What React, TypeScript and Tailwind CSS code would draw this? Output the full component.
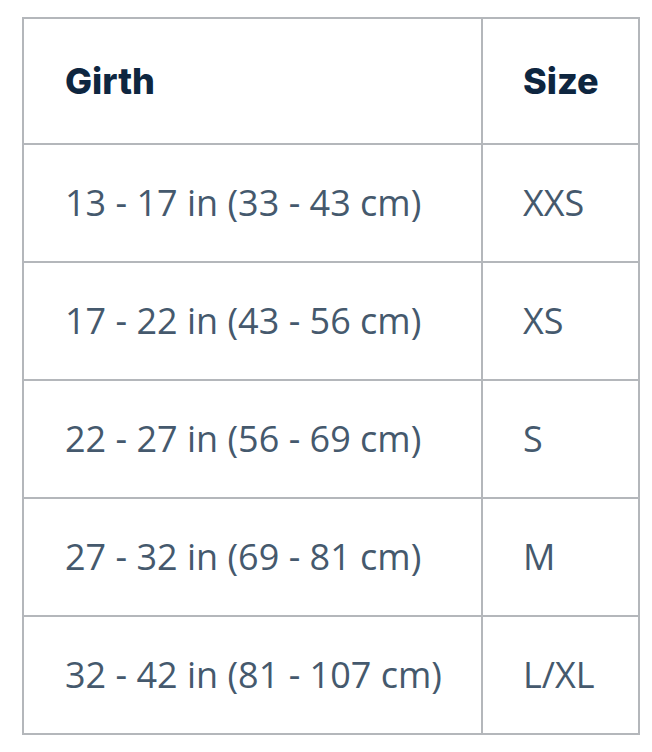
import React from 'react';

const rows = [
  { girth: '13 - 17 in (33 - 43 cm)', size: 'XXS' },
  { girth: '17 - 22 in (43 - 56 cm)', size: 'XS' },
  { girth: '22 - 27 in (56 - 69 cm)', size: 'S' },
  { girth: '27 - 32 in (69 - 81 cm)', size: 'M' },
  { girth: '32 - 42 in (81 - 107 cm)', size: 'L/XL' },
];

export default function App() {
  return (
    <div className="w-[652px] h-[752px] bg-white pt-[17px] pl-[22px]">
      <div className="w-[618px] border-2 border-[#b4b7bb]">
        {/* Header */}
        <div className="flex h-[124px] font-['Inter',sans-serif] font-extrabold text-[36px] text-[#0e2640]">
          <div className="w-[459px] border-r-2 border-[#b4b7bb] pl-[41px] flex items-center">Girth</div>
          <div className="flex-1 pl-[40px] flex items-center">Size</div>
        </div>
        {rows.map((row) => (
          <div
            key={row.size}
            className="flex h-[118px] border-t-2 border-[#b4b7bb] font-['Open_Sans',sans-serif] text-[36px] text-[#45596d]"
          >
            <div className="w-[459px] border-r-2 border-[#b4b7bb] pl-[41px] flex items-center">{row.girth}</div>
            <div className="flex-1 pl-[40px] flex items-center">{row.size}</div>
          </div>
        ))}
      </div>
    </div>
  );
}
